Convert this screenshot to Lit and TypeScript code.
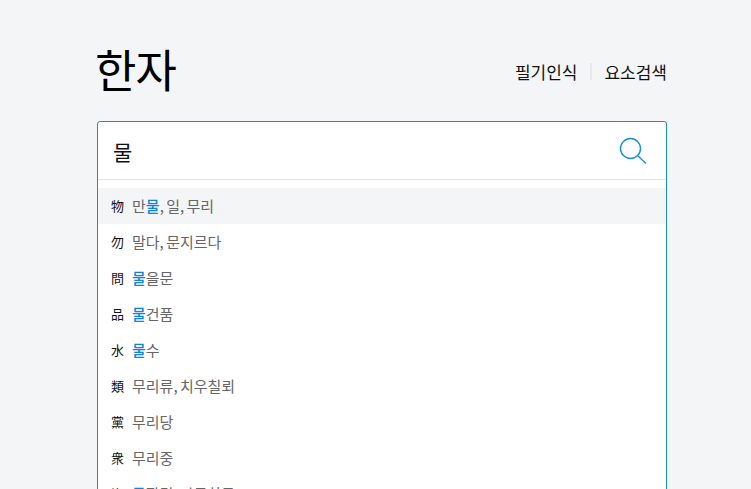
import { LitElement, html, css } from "lit";
import { customElement } from "lit/decorators.js";
import { unsafeHTML } from "lit/directives/unsafe-html.js";

const rows: [string, string][] = [
  ["物", "만<b>물</b>, 일, 무리"],
  ["勿", "말다, 문지르다"],
  ["問", "<b>물</b>을문"],
  ["品", "<b>물</b>건품"],
  ["水", "<b>물</b>수"],
  ["類", "무리류, 치우칠뢰"],
  ["黨", "무리당"],
  ["衆", "무리중"],
  ["沕", "<b>물</b>잠길, 아득할물"],
];

@customElement("app-root")
export class AppRoot extends LitElement {
  static styles = css`
    :host {
      display: block;
      height: 489px;
      overflow: hidden;
      background: #f4f5f7;
      font-family: "Noto Sans CJK KR", "Noto Sans", sans-serif;
    }
    .wrap { width: 570px; margin-left: 97px; padding-top: 40px; }
    .head { display: flex; justify-content: space-between; align-items: center; height: 60px; margin-bottom: 21px; }
    h1 { margin: -3px 0 0 -2px; font-size: 45px; font-weight: 400; color: #000; line-height: 60px; letter-spacing: -1px; }
    nav { display: flex; align-items: center; font-size: 17px; color: #111; padding-top: 3px; }
    nav i { width: 2px; height: 17px; background: #e6e8eb; margin: 0 12px 0 13px; }
    .box { border: 1px solid #1a8fc4; border-radius: 3px; background: #fff; height: 500px; }
    .input { display: flex; justify-content: space-between; align-items: center; height: 57px; padding: 0 19px 0 15px; border-bottom: 1px solid #e1e3e6; font-size: 21px; color: #111; }
    .input svg { display: block; }
    ul { list-style: none; margin: 8px 0 0; padding: 0; }
    li { display: flex; align-items: center; gap: 8px; height: 36px; padding-left: 13px; font-size: 15px; word-spacing: -1px; color: #666; }
    li:first-child { background: #f4f5f7; }
    .h { color: #111; font-size: 13px; width: 12px; margin: -2px 1px 0 0; }
    .t { margin-top: -2px; }
    .t b { font-weight: 500; color: #0c85e0; }
  `;
  render() {
    return html`<div class="wrap">
      <div class="head">
        <h1>한자</h1>
        <nav><span>필기인식</span><i></i><span>요소검색</span></nav>
      </div>
      <div class="box">
        <div class="input">
          <span>물</span>
          <svg width="28" height="28" viewBox="0 0 28 28" fill="none" stroke="#1a8fd8" stroke-width="1.4">
            <circle cx="11.5" cy="11.5" r="10"></circle>
            <path d="M19 19l8 7.5"></path>
          </svg>
        </div>
        <ul>
          ${rows.map(([h, t]) => html`<li><span class="h">${h}</span><span class="t">${unsafeHTML(t)}</span></li>`)}
        </ul>
      </div>
    </div>`;
  }
}
